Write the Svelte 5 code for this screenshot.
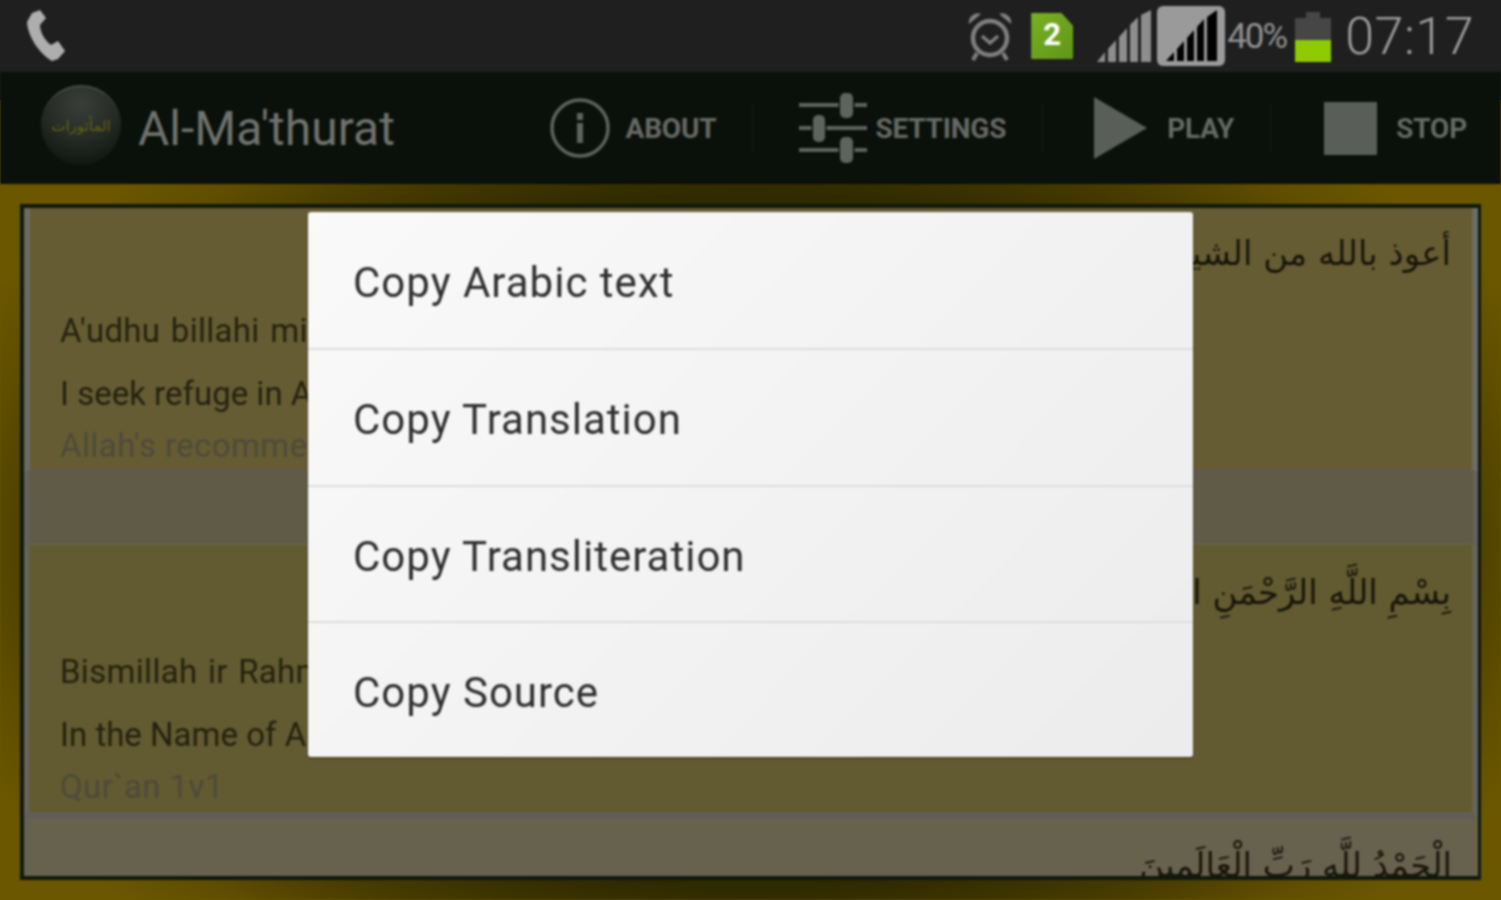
<script>
  const actions = [
    { id: 'about', label: 'ABOUT' },
    { id: 'settings', label: 'SETTINGS' },
    { id: 'play', label: 'PLAY' },
    { id: 'stop', label: 'STOP' }
  ];
  const verses = [
    {
      kind: 'verse',
      arabic: 'أعوذ بالله من الشيطان الرجيم',
      translit: "A'udhu billahi minash shaitanir rajim",
      translation: 'I seek refuge in Allah from the accursed Satan',
      source: "Allah's recommendation in Qur`an 16v98"
    },
    { kind: 'gap' },
    {
      kind: 'verse',
      arabic: 'بِسْمِ اللَّهِ الرَّحْمَنِ الرَّحِيمِ',
      translit: 'Bismillah ir Rahman ir Rahim',
      translation: 'In the Name of Allah, the Most Gracious',
      source: 'Qur`an 1v1'
    },
    { kind: 'last', arabic: 'الْحَمْدُ لِلَّهِ رَبِّ الْعَالَمِينَ' }
  ];
  const menu = ['Copy Arabic text', 'Copy Translation', 'Copy Transliteration', 'Copy Source'];
</script>

<div class="screen">
  <header class="status">
    <svg class="phone" viewBox="0 0 40 52" width="40" height="52">
      <path d="M7 3 L15 0 L21 8 L15 15 C15 21 19 30 26 35 L33 31 L40 41 L33 49 L27 51 C14 43 3 27 2 12 Z" fill="#aeaeae"/>
    </svg>
    <div class="status-right">
      <svg class="alarm" viewBox="0 0 46 50" width="46" height="50">
        <circle cx="23" cy="27" r="17" fill="none" stroke="#7f7f7f" stroke-width="4.5"/>
        <path d="M2 13 A9 9 0 0 1 14 3 Z M44 13 A9 9 0 0 0 32 3 Z" fill="#7f7f7f"/>
        <path d="M15 25 L23 32 L31 25" fill="none" stroke="#7f7f7f" stroke-width="3.5"/>
        <path d="M10 42 L6 49 M36 42 L40 49" stroke="#7f7f7f" stroke-width="4"/>
      </svg>
      <div class="sim">2</div>
      <svg class="sig" viewBox="0 0 54 52" width="54" height="52">
        <path d="M0 52 L8 42 V52 Z M11 39 L19 30 V52 H11 Z M22 27 L30 18 V52 H22 Z M33 15 L41 7 V52 H33 Z M44 5 L54 0 V52 H44 Z" fill="#8d8d8d"/>
      </svg>
      <svg class="sig2" viewBox="0 0 68 60" width="68" height="60">
        <rect width="68" height="60" rx="6" fill="#9a9a9a"/>
        <path d="M9 55 L17 46 V55 Z M20 43 L27 35 V55 H20 Z M30 32 L37 24 V55 H30 Z M40 21 L47 13 V55 H40 Z M50 11 L60 4 V55 H50 Z" fill="#000"/>
      </svg>
      <span class="pct">40%</span>
      <div class="battery"><span class="nub"></span><span class="cell"></span></div>
      <span class="clock">07:17</span>
    </div>
  </header>

  <nav class="bar">
    <div class="logo"><span dir="rtl">المأثورات</span></div>
    <h1>Al-Ma'thurat</h1>
    {#each actions as a, i}
      <div class="action {a.id}" class:ruled={i < actions.length - 1}>
        {#if a.id === 'about'}
          <svg viewBox="0 0 60 60" width="60" height="60">
            <circle cx="30" cy="30" r="28" fill="none" stroke="#5f635e" stroke-width="3.5"/>
            <rect x="27" y="15" width="6" height="7" fill="#5f635e"/>
            <rect x="27" y="25" width="6" height="20" fill="#5f635e"/>
          </svg>
        {:else if a.id === 'settings'}
          <svg viewBox="0 0 68 70" width="68" height="70">
            <path d="M0 12 H68 M0 35 H68 M0 57 H68" stroke="#5f635e" stroke-width="4"/>
            <rect class="knob" x="41" y="0" width="13" height="25" rx="5"/>
            <rect class="knob" x="14" y="22" width="12" height="27" rx="5"/>
            <rect class="knob" x="41" y="44" width="13" height="26" rx="5"/>
          </svg>
        {:else if a.id === 'play'}
          <svg viewBox="0 0 53 62" width="53" height="62"><path d="M0 0 L53 31 L0 62 Z" fill="#5a5e59"/></svg>
        {:else}
          <span class="square"></span>
        {/if}
        <span class="label">{a.label}</span>
      </div>
    {/each}
  </nav>

  <main class="content">
    <div class="frame">
      {#each verses as v}
        {#if v.kind === 'verse'}
          <section class="verse">
            <p class="arabic" dir="rtl">{v.arabic}</p>
            <p class="translit">{v.translit}</p>
            <p class="translation">{v.translation}</p>
            <p class="source">{v.source}</p>
          </section>
        {:else if v.kind === 'gap'}
          <div class="gap"></div>
        {:else}
          <section class="last"><p class="arabic" dir="rtl">{v.arabic}</p></section>
        {/if}
      {/each}
    </div>
  </main>

  <div class="dialog">
    {#each menu as m}
      <div class="item">{m}</div>
    {/each}
  </div>
</div>

<style>
  :global(html) { background: linear-gradient(#1f1f20 0, #1f1f20 100px, #6b5700 100px, #6b5700 100%); }
  :global(body) { margin: 0; }
  .screen {
    position: relative;
    width: 1501px;
    height: 900px;
    overflow: hidden;
    display: flex;
    flex-direction: column;
    font-family: Roboto, "Liberation Sans", sans-serif;
    filter: blur(0.8px);
  }
  .status {
    height: 72px;
    flex: none;
    background: #1f1f20;
    display: flex;
    align-items: center;
    justify-content: space-between;
    padding: 0 27px 0 25px;
  }
  .phone { margin-top: -1px; }
  .status-right { display: flex; align-items: center; }
  .alarm { margin-right: 18px; }
  .sim {
    width: 42px;
    height: 46px;
    background: linear-gradient(135deg, #79b021, #5f961a);
    clip-path: polygon(0 0, 72% 0, 100% 28%, 100% 100%, 0 100%);
    color: #fff;
    font-weight: 700;
    font-size: 31px;
    line-height: 44px;
    text-align: center;
    margin-right: 24px;
  }
  .sig { margin-right: 6px; }
  .sig2 { margin-right: 2px; }
  .pct {
    font-size: 35px;
    color: #929292;
    letter-spacing: -2px;
    width: 68px;
  }
  .battery {
    position: relative;
    width: 36px;
    height: 44px;
    margin-top: 8px;
    margin-right: 14px;
    background: #464646;
  }
  .nub {
    position: absolute;
    top: -6px;
    left: 11px;
    width: 14px;
    height: 6px;
    background: #464646;
  }
  .cell {
    position: absolute;
    left: 0;
    right: 0;
    bottom: 0;
    height: 22px;
    background: #8fcb00;
  }
  .clock {
    font-size: 52px;
    font-weight: 300;
    color: #9c9c9c;
    letter-spacing: 0.5px;
  }
  .bar {
    height: 112px;
    flex: none;
    background: #0a100a;
    display: flex;
    align-items: center;
    padding-left: 41px;
    box-sizing: border-box;
  }
  .logo {
    width: 80px;
    height: 80px;
    margin-top: -6px;
    border-radius: 50%;
    background: radial-gradient(circle at 50% 22%, #393e38 0%, #272c26 45%, #0c120c 92%);
    border-top: 2px solid #474b46;
    box-sizing: border-box;
    display: flex;
    align-items: center;
    justify-content: center;
    color: #5f6014;
    font: 15px "DejaVu Sans", sans-serif;
    flex: none;
  }
  h1 {
    margin: 0 0 0 17px;
    flex: 1;
    font-size: 48px;
    font-weight: 400;
    color: #6f736e;
    white-space: nowrap;
  }
  .action {
    display: flex;
    align-items: center;
    height: 48px;
    padding-right: 36px;
    color: #666a65;
  }
  .ruled { border-right: 1px solid #171d17; }
  .about { gap: 16px; }
  .settings { gap: 8px; padding-left: 46px; }
  .play { gap: 20px; padding-left: 51px; }
  .stop { gap: 19px; padding-left: 53px; padding-right: 34px; }
  .label {
    font-size: 28px;
    font-weight: 700;
    letter-spacing: -0.2px;
    line-height: 48px;
    margin-top: 1px;
  }
  .knob {
    fill: #5f635e;
    stroke: #0a100a;
    stroke-width: 3;
    paint-order: stroke;
  }
  .square {
    display: block;
    width: 53px;
    height: 53px;
    background: #5a5e59;
  }
  .content {
    flex: 1;
    padding: 20px;
    background: radial-gradient(ellipse 800px 480px at 50% 50%, #1c1800 0%, #2f2a00 72%, #4a3e00 88%, #5f4e00 98%, #6b5700 108%);
    min-height: 0;
  }
  .frame {
    height: 100%;
    box-sizing: border-box;
    border: 4px solid #10190f;
    border-right-width: 3px;
    overflow: hidden;
    background: #66624e;
  }
  p { margin: 0; white-space: nowrap; }
  .verse {
    height: 264px;
    background: #665c33;
    border-left: 6px solid #6a6c60;
    border-right: 6px solid #6c6e64;
    border-bottom: 2px solid #5d5b55;
    padding: 15px 21px 0 30px;
    box-sizing: border-box;
  }
  .verse + .gap + .verse {
    height: 273px;
    background: #625a30;
    border-left: 5px solid #65645a;
    border-right-color: #65655c;
    border-bottom: 6px solid #5f5e58;
    padding-top: 17px;
    padding-left: 31px;
  }
  .verse + .gap + .verse .translit { margin-top: 28px; }
  .gap {
    height: 73px;
    background: #5f5b47;
    border-left: 5px solid #65625a;
    border-right: 5px solid #65625a;
    border-bottom: 2px solid #62604f;
    box-sizing: border-box;
  }
  .arabic {
    font: 34px/60px "DejaVu Sans", sans-serif;
    color: #17150a;
    text-align: right;
  }
  .translit, .translation, .source {
    line-height: 44px;
    font-size: 33px;
  }
  .translit { margin-top: 26px; color: #24220f; letter-spacing: 0.3px; word-spacing: 2px; }
  .translation { margin-top: 19px; color: #24220f; }
  .source { margin-top: 8px; color: #4d4a3a; letter-spacing: 0.4px; }
  .last { padding: 17px 26px 0 30px; }
  .dialog {
    position: absolute;
    left: 308px;
    top: 212px;
    width: 885px;
    height: 545px;
    background: linear-gradient(135deg, #fafafa 0%, #f3f3f4 50%, #ececec 100%);
    border-radius: 3px;
    box-shadow: 0 1px 2px rgba(0, 0, 0, 0.5);
    display: grid;
    grid-template-rows: repeat(4, 1fr);
  }
  .item {
    display: flex;
    align-items: center;
    padding: 5px 0 0 45px;
    font-size: 42px;
    color: #2f2f2f;
    letter-spacing: 1px;
    border-top: 2px solid #dddddd;
  }
  .item:first-child { border-top: 0; }
</style>
